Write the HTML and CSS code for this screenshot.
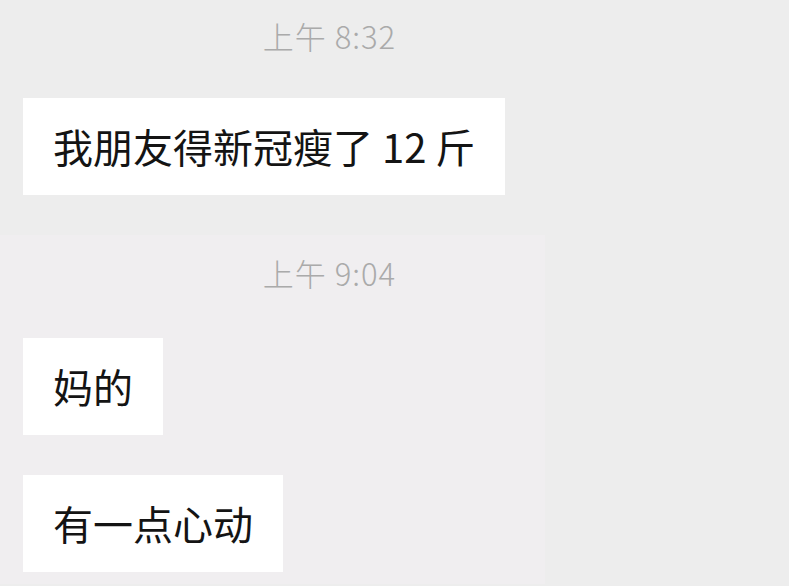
FILE: index.html
```html
<!DOCTYPE html>
<html lang="zh-CN">
<head>
    <meta charset="UTF-8">
    <meta name="viewport" content="width=device-width, initial-scale=1.0">
    <title>聊天记录</title>
    <link rel="stylesheet" href="styles.css">
</head>
<body>
    <div class="chat">
        <div class="time">上午 8:32</div>
        <div class="row">
            <div class="bubble">我朋友得新冠瘦了 12 斤</div>
        </div>

        <!-- later messages sit on a slightly lighter strip -->
        <div class="later">
            <div class="time time-second">上午 9:04</div>
            <div class="row">
                <div class="bubble">妈的</div>
            </div>
            <div class="row">
                <div class="bubble">有一点心动</div>
            </div>
        </div>
    </div>
</body>
</html>
```

FILE: styles.css
```css
body {
    margin: 0;
    padding: 0;
    background-color: #ededed;
    font-family: "Noto Sans CJK SC", "Noto Sans", sans-serif;
    color: #141414;
    overflow: hidden;
}
.chat {
    width: 659px;
    padding-top: 14px;
}
.time {
    text-align: center;
    font-size: 31px;
    font-weight: 300;
    letter-spacing: 1px;
    line-height: 44px;
    color: #aaaaaa;
    margin-bottom: 40px;
}
.later {
    margin-top: 38px;
    padding-top: 16px;
    padding-bottom: 12px;
    background: linear-gradient(to right, #f0eef0 0, #f0eef0 545px, transparent 545px);
}
.time-second {
    margin-bottom: 43px;
}
.row {
    display: flex;
    padding-left: 23px;
    margin-bottom: 40px;
}
.later .row:last-child {
    margin-bottom: 0;
}
.bubble {
    background-color: #ffffff;
    font-size: 40px;
    line-height: 40px;
    padding: 28px 30px 29px 30px;
}
```
